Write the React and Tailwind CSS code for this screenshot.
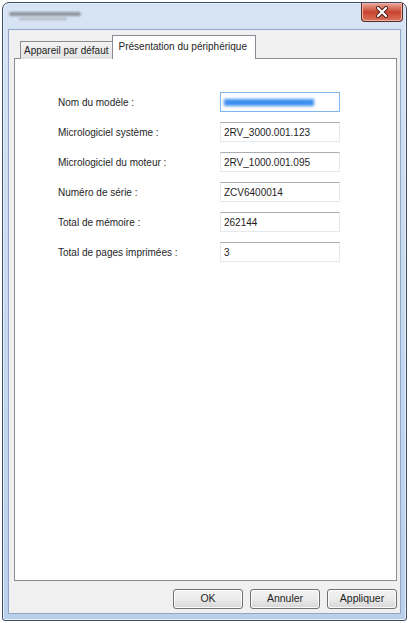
import React from "react";

const rows = [
  { label: "Nom du modèle :", value: null, focus: true },
  { label: "Micrologiciel système :", value: "2RV_3000.001.123" },
  { label: "Micrologiciel du moteur :", value: "2RV_1000.001.095" },
  { label: "Numéro de série :", value: "ZCV6400014" },
  { label: "Total de mémoire :", value: "262144" },
  { label: "Total de pages imprimées :", value: "3" },
];

function Btn({ children }) {
  return (
    <div className="w-[70px] h-[20px] rounded-[3px] border border-[#707070] bg-gradient-to-b from-[#f2f2f2] via-[#ebebeb] to-[#d6d6d6] flex items-center justify-center text-[10.5px] text-[#1e1e1e] shadow-[inset_0_0_0_1px_#fcfcfc]">
      {children}
    </div>
  );
}

export default function App() {
  return (
    <div
      className="w-[409px] h-[623px] bg-white pt-[2px] pl-[2px]"
      style={{ fontFamily: '"Liberation Sans", Arial, sans-serif' }}
    >
      <div className="w-[405px] h-[619px] border border-[#3f4e62] rounded-t-[7px] rounded-b-[3px] bg-gradient-to-b from-[#d7e4f4] via-[#c6d9ef] to-[#b9d0eb] flex flex-col shadow-[inset_0_0_0_1px_#e6eef9]">
        {/* title bar */}
        <div className="h-[26px] flex items-start justify-between pl-[6px] pr-[3px]">
          <div className="mt-[9px] flex flex-col gap-[2px] blur-[1px]">
            <div className="w-[72px] h-[4px] bg-[#8d949c] rounded-full" />
            <div className="ml-[10px] w-[48px] h-[2px] bg-[#aab1b9] rounded-full" />
          </div>
          <div className="w-[42px] h-[19px] rounded-b-[4px] border border-[#5c2a25] border-t-0 bg-gradient-to-b from-[#e9a99c] via-[#c8432f] to-[#d9725c] flex items-center justify-center shadow-[inset_0_0_0_1px_#f0b0a4]">
            <svg width="14" height="12" viewBox="0 0 14 12">
              <path d="M3 2 L11 10 M11 2 L3 10" stroke="#4a1c18" strokeWidth="4" strokeLinecap="round" />
              <path d="M3 2 L11 10 M11 2 L3 10" stroke="#ffffff" strokeWidth="2.2" strokeLinecap="round" />
            </svg>
          </div>
        </div>
        {/* content */}
        <div className="mx-[5px] mb-[6px] flex-1 border border-[#8ea7c6] bg-[#f0f0f0] flex flex-col">
          {/* tabs */}
          <div className="ml-[11px] mt-[4px] flex items-end h-[24px] relative z-10">
            <div className="h-[18px] px-[3px] border border-[#898c95] border-b-0 border-r-0 bg-gradient-to-b from-[#f3f3f3] to-[#e3e3e3] flex items-center text-[10px] text-[#1e1e1e] mb-[-1px]">
              <span>Appareil par défaut</span>
            </div>
            <div className="h-[24px] w-[144px] border border-[#898c95] border-b-0 bg-white flex items-start pl-[6px] pt-[3px] text-[10px] text-[#1e1e1e] mb-[-1px]">
              Présentation du périphérique
            </div>
          </div>
          <div className="ml-[5px] mr-[3px] h-[523px] border border-[#898c95] bg-white pt-[33px] pl-[43px] flex flex-col gap-[10px]">
            {rows.map((r, i) => (
              <div key={i} className="flex items-center">
                <div className="w-[162px] text-[10px] text-[#1e1e1e]">{r.label}</div>
                {r.focus ? (
                  <div className="w-[120px] h-[20px] border border-[#7eb4ea] flex items-center pl-[3px]">
                    <div className="w-[90px] h-[7px] bg-[#3c8ef0] blur-[1.5px]" />
                  </div>
                ) : (
                  <div className="w-[120px] h-[20px] border border-[#e3e9ef] border-t-[#abadb3] flex items-center pl-[3px] text-[10px] text-[#1e1e1e]">
                    {r.value}
                  </div>
                )}
              </div>
            ))}
          </div>
          <div className="flex justify-end gap-[7px] pr-[3px] mt-[8px]">
            <Btn>OK</Btn>
            <Btn>Annuler</Btn>
            <Btn>Appliquer</Btn>
          </div>
        </div>
      </div>
    </div>
  );
}
